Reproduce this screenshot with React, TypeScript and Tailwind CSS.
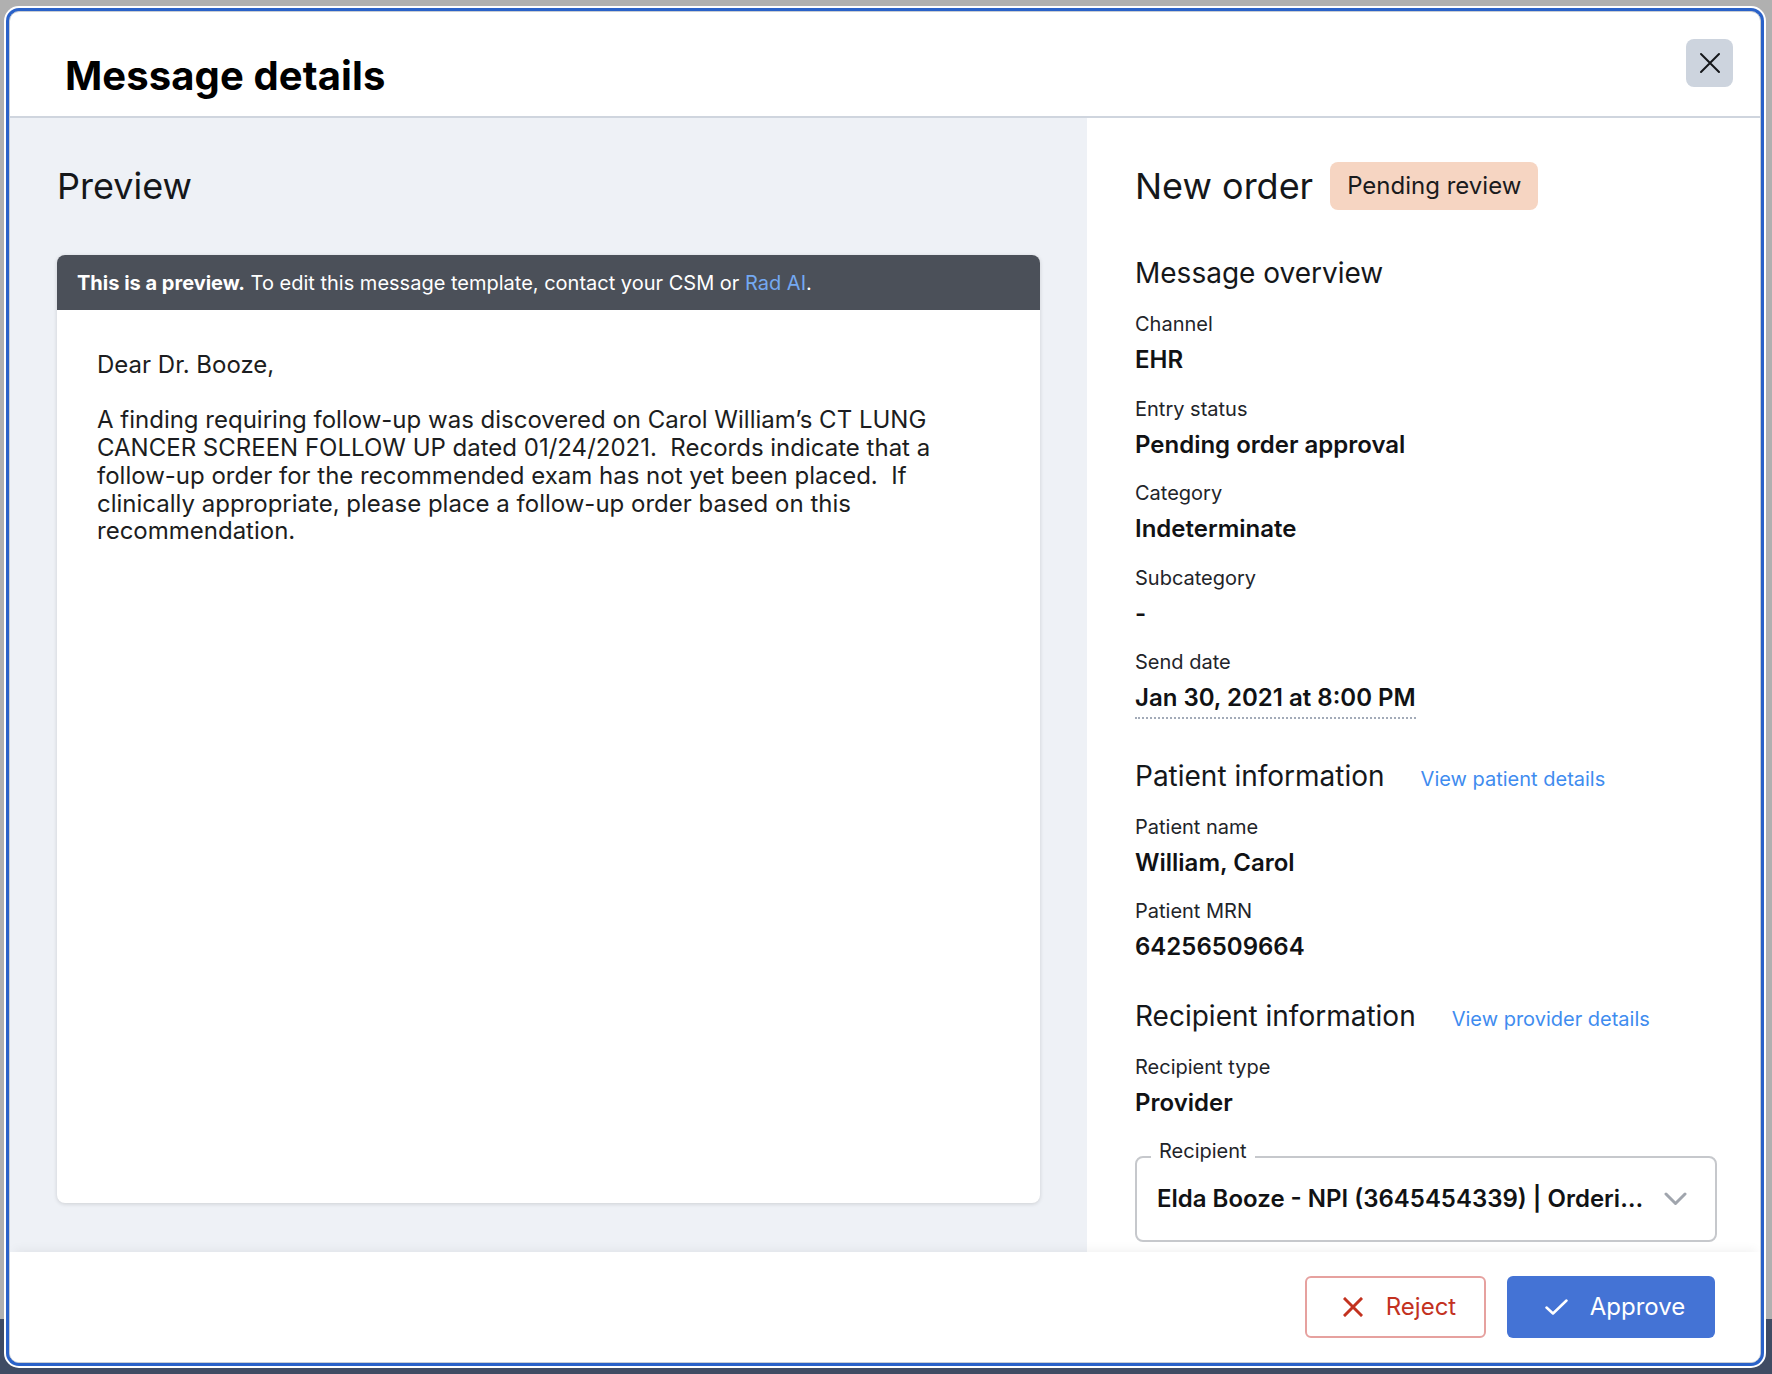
import React from "react";

const font = { fontFamily: "Inter, 'Noto Sans', sans-serif" };

function Field({ label, value, dotted }: { label: string; value: string; dotted?: boolean }) {
  return (
    <div className="mb-[18.5px]">
      <div className="text-[20px] leading-[28px] text-[#222429]">{label}</div>
      <div className="mt-[6px] text-[24px] leading-[32px] font-semibold text-[#111214]">
        {dotted ? (
          <span className="inline-block pb-[3px] border-b-2 border-dotted border-[#a3abb8]">{value}</span>
        ) : (
          value
        )}
      </div>
    </div>
  );
}

function SectionHeading({ title, link }: { title: string; link?: string }) {
  return (
    <div className="flex items-baseline gap-[36px] mb-[19px]">
      <h3 className="text-[28px] leading-[36px] font-normal text-[#15171a]">{title}</h3>
      {link && <span className="text-[20px] leading-[28px] text-[#3f8cef]">{link}</span>}
    </div>
  );
}

export default function App() {
  return (
    <div
      style={font}
      className="w-[1772px] h-[1374px] overflow-hidden pt-[11px] pl-[9px] bg-[linear-gradient(to_bottom,#b0b0b0_96%,#3f4b63_96%)]"
    >
      <div className="relative w-[1752px] h-[1352px] flex flex-col bg-white rounded-[10px] border border-[#c9cdd3] shadow-[0_0_0_3px_#2a62c9,0_0_0_5px_#ffffff] overflow-hidden">
        {/* Header */}
        <div className="h-[106px] shrink-0 border-b-2 border-[#cfd5de] pl-[55px] pt-[40px]">
          <h1 className="text-[40px] leading-[48px] font-bold text-black tracking-[0.1px]">Message details</h1>
        </div>
        <button className="absolute right-[27px] top-[27px] w-[47px] h-[48px] rounded-[8px] bg-[#cdd4de] flex items-center justify-center">
          <svg width="22" height="22" viewBox="0 0 22 22" fill="none" stroke="#15171a" strokeWidth="2" strokeLinecap="round">
            <path d="M2 2 L20 20 M20 2 L2 20" />
          </svg>
        </button>

        {/* Body */}
        <div className="flex flex-1 min-h-0">
          {/* Left: preview */}
          <div className="w-[1077px] shrink-0 bg-[#eef1f6] px-[47px] pt-[48px] pb-[49px] flex flex-col">
            <h2 className="text-[36px] leading-[40px] font-normal text-[#15171a]">Preview</h2>
            <div className="mt-[49px] flex-1 bg-white rounded-[8px] shadow-[0_1px_4px_rgba(0,0,0,0.14)] overflow-hidden flex flex-col">
              <div className="h-[55px] shrink-0 bg-[#4b5059] px-[20px] flex items-center text-[20px] text-white">
                <span className="font-bold">This is a preview.</span>
                <span className="whitespace-pre">{" To edit this message template, contact your CSM or "}</span>
                <span className="text-[#74a9f2]">Rad AI</span>
                <span>.</span>
              </div>
              <div className="pl-[40px] pr-[72px] pt-[41px] text-[24px] leading-[27.7px] text-[#1c1d20]">
                <p>Dear Dr. Booze,</p>
                <p className="mt-[27.7px] whitespace-pre-wrap">
                  {"A finding requiring follow-up was discovered on Carol William\u2019s CT LUNG CANCER SCREEN FOLLOW UP dated 01/24/2021.  Records indicate that a follow-up order for the recommended exam has not yet been placed.  If clinically appropriate, please place a follow-up order based on this recommendation."}
                </p>
              </div>
            </div>
          </div>

          {/* Right: details */}
          <div className="flex-1 min-w-0 bg-white pl-[48px] pr-[45px] pt-[44px] overflow-hidden flex flex-col">
            <div className="flex items-center gap-[17px] h-[48px] shrink-0">
              <h2 className="text-[36px] leading-[40px] font-normal text-[#15171a]">New order</h2>
              <span className="h-[48px] px-[17px] rounded-[8px] bg-[#f6d5c2] text-[24px] leading-[48px] text-[#1a1b1d]">
                Pending review
              </span>
            </div>

            <div className="mt-[45px] flex flex-col shrink-0">
              <SectionHeading title="Message overview" />
              <Field label="Channel" value="EHR" />
              <Field label="Entry status" value="Pending order approval" />
              <Field label="Category" value="Indeterminate" />
              <Field label="Subcategory" value="-" />
              <Field label="Send date" value="Jan 30, 2021 at 8:00 PM" dotted />
            </div>

            <div className="mt-[20px] flex flex-col shrink-0">
              <SectionHeading title="Patient information" link="View patient details" />
              <Field label="Patient name" value="William, Carol" />
              <Field label="Patient MRN" value="64256509664" />
            </div>

            <div className="mt-[16px] flex flex-col shrink-0">
              <SectionHeading title="Recipient information" link="View provider details" />
              <Field label="Recipient type" value="Provider" />
              <div className="relative mt-[19px] h-[86px] w-[582px] shrink-0 rounded-[8px] border-2 border-[#c6c8cc] pl-[20px] pr-[28px] flex items-center">
                <span className="absolute left-[14px] top-[-21px] px-[8px] bg-white text-[20px] leading-[28px] text-[#222429]">
                  Recipient
                </span>
                <span className="w-[488px] truncate text-[24px] leading-[32px] font-semibold text-[#111214]">
                  Elda Booze - NPI (3645454339) | Ordering provider
                </span>
                <svg className="ml-auto" width="23" height="14" viewBox="0 0 23 14" fill="none" stroke="#a0a5ad" strokeWidth="3" strokeLinecap="round" strokeLinejoin="round">
                  <path d="M2 2 L11.5 11.5 L21 2" />
                </svg>
              </div>
            </div>
          </div>
        </div>

        {/* Footer */}
        <div className="relative h-[110px] shrink-0 bg-white shadow-[0_-6px_10px_-4px_rgba(0,0,0,0.06)] flex items-center justify-end gap-[21px] pr-[45px]">
          <button className="w-[181px] h-[62px] rounded-[6px] border-2 border-[#e6a19f] bg-white flex items-center justify-center gap-[23px] pl-[8px]">
            <svg width="20" height="20" viewBox="0 0 20 20" fill="none" stroke="#c3321f" strokeWidth="3" strokeLinecap="square">
              <path d="M2 2 L18 18 M18 2 L2 18" />
            </svg>
            <span className="text-[24px] leading-[32px] text-[#c3321f]">Reject</span>
          </button>
          <button className="w-[208px] h-[62px] rounded-[6px] bg-[#4473d5] flex items-center justify-center gap-[22px] pl-[8px]">
            <svg width="23" height="16" viewBox="0 0 23 16" fill="none" stroke="#ffffff" strokeWidth="2.5" strokeLinecap="round" strokeLinejoin="round">
              <path d="M1.5 8.5 L8 14.5 L21.5 1.5" />
            </svg>
            <span className="text-[24px] leading-[32px] text-white">Approve</span>
          </button>
        </div>
      </div>
    </div>
  );
}
